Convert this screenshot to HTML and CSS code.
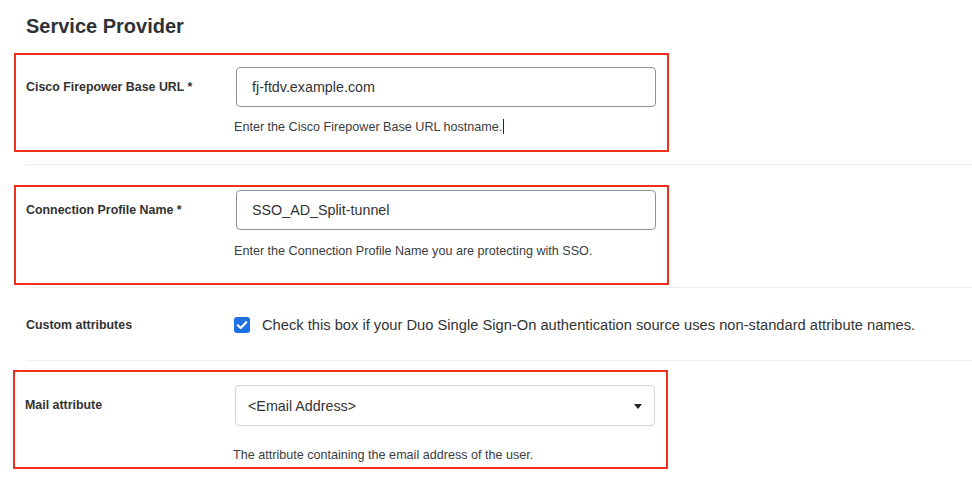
FILE: index.html
```html
<!DOCTYPE html>
<html lang="en">
<head>
	<meta charset="UTF-8">
	<title>Service Provider</title>
	<link rel="stylesheet" href="styles.css">
</head>
<body>
	<div class="page">
		<h2>Service Provider</h2>

		<div class="field marked first">
			<label class="name" for="base-url">Cisco Firepower Base URL *</label>
			<div class="control">
				<input type="text" id="base-url" value="fj-ftdv.example.com">
				<p class="help">Enter the Cisco Firepower Base URL hostname.<span class="cursor"></span></p>
			</div>
		</div>
		<div class="sep sep-1"></div>

		<div class="field marked second">
			<label class="name" for="profile">Connection Profile Name *</label>
			<div class="control">
				<input type="text" id="profile" value="SSO_AD_Split-tunnel">
				<p class="help">Enter the Connection Profile Name you are protecting with SSO.</p>
			</div>
		</div>
		<div class="sep sep-2"></div>

		<div class="field plain">
			<span class="name">Custom attributes</span>
			<label class="check">
				<span class="box">
					<svg width="16" height="16" viewBox="0 0 16 16"><path d="M3.8 8.2 6.7 11 12.2 5.2" fill="none" stroke="#fff" stroke-width="2.2" stroke-linecap="round" stroke-linejoin="round"/></svg>
				</span>
				Check this box if your Duo Single Sign-On authentication source uses non-standard attribute names.
			</label>
		</div>
		<div class="sep sep-3"></div>

		<div class="field marked third">
			<span class="name">Mail attribute</span>
			<div class="control">
				<div class="select">
					<span>&lt;Email Address&gt;</span>
					<span class="caret"></span>
				</div>
				<p class="help">The attribute containing the email address of the user.</p>
			</div>
		</div>
	</div>
</body>
</html>
```

FILE: styles.css
```css
html, body {
	margin: 0;
	padding: 0;
	background: #fff;
}
body {
	font-family: "Liberation Sans", Arial, sans-serif;
	color: #333;
}
.page {
	padding: 14px 0 0 14px;
}
h2 {
	margin: 0 0 0 12px;
	font-size: 20px;
	line-height: 24px;
	color: #2e3237;
}
.field {
	display: flex;
	align-items: flex-start;
	box-sizing: border-box;
	width: 655px;
	padding: 0 12px 0 10px;
	border: 2px solid transparent;
}
.marked {
	border-color: #f22f1c;
}
.first {
	margin-top: 15px;
	padding-top: 12px;
	padding-bottom: 15px;
}
.second {
	margin-top: 20px;
	padding-top: 3px;
	padding-bottom: 24px;
}
.third {
	margin-left: -1px;
	margin-top: 9px;
	padding-top: 13px;
	padding-bottom: 4px;
}
.plain {
	margin-top: 26px;
	width: auto;
	align-items: center;
	padding-bottom: 24px;
}
.name {
	flex: 0 0 209px;
	font-size: 12.4px;
	font-weight: bold;
	line-height: 40px;
	color: #333;
}
.plain .name {
	line-height: 18px;
	flex-basis: 208px;
}
.control {
	flex: 1 1 auto;
}
input[type="text"], .select {
	display: block;
	box-sizing: border-box;
	width: 420px;
	height: 40px;
	margin: 0;
	padding: 0 15px;
	border: 1px solid #8e9298;
	border-radius: 4px;
	font-family: inherit;
	font-size: 14.3px;
	color: #333;
	background: #fff;
	outline: none;
}
.first input {
	margin-left: 1px;
}
.second input {
	margin-left: 1px;
}
.select {
	display: flex;
	align-items: center;
	justify-content: space-between;
	height: 41px;
	padding: 0 12px 0 12px;
	border-color: #d3d4d6;
	margin-left: 1px;
}
.caret {
	width: 0;
	height: 0;
	margin-top: 2px;
	border-left: 4.5px solid transparent;
	border-right: 4.5px solid transparent;
	border-top: 5px solid #222;
}
.help {
	margin: 12px 0 0 -1px;
	font-size: 12.6px;
	line-height: 16px;
	color: #3a3d41;
}
.second .help {
	margin-top: 13px;
}
.third .help {
	margin-top: 21px;
}
.cursor {
	display: inline-block;
	width: 0;
	height: 15px;
	margin-left: 1px;
	border-left: 1px solid #222;
	vertical-align: -3px;
}
.check {
	display: flex;
	align-items: center;
	font-size: 14.7px;
	line-height: 18px;
	color: #333;
	white-space: nowrap;
}
.box {
	display: flex;
	width: 16px;
	height: 16px;
	margin: 0 12px 0 0;
	border-radius: 3px;
	background: #1f6fe6;
}
.sep {
	height: 1px;
	margin-left: 12px;
	background: #eceded;
}
.sep-1 {
	margin-top: 12px;
}
.sep-2 {
	margin-top: 2px;
}
```
